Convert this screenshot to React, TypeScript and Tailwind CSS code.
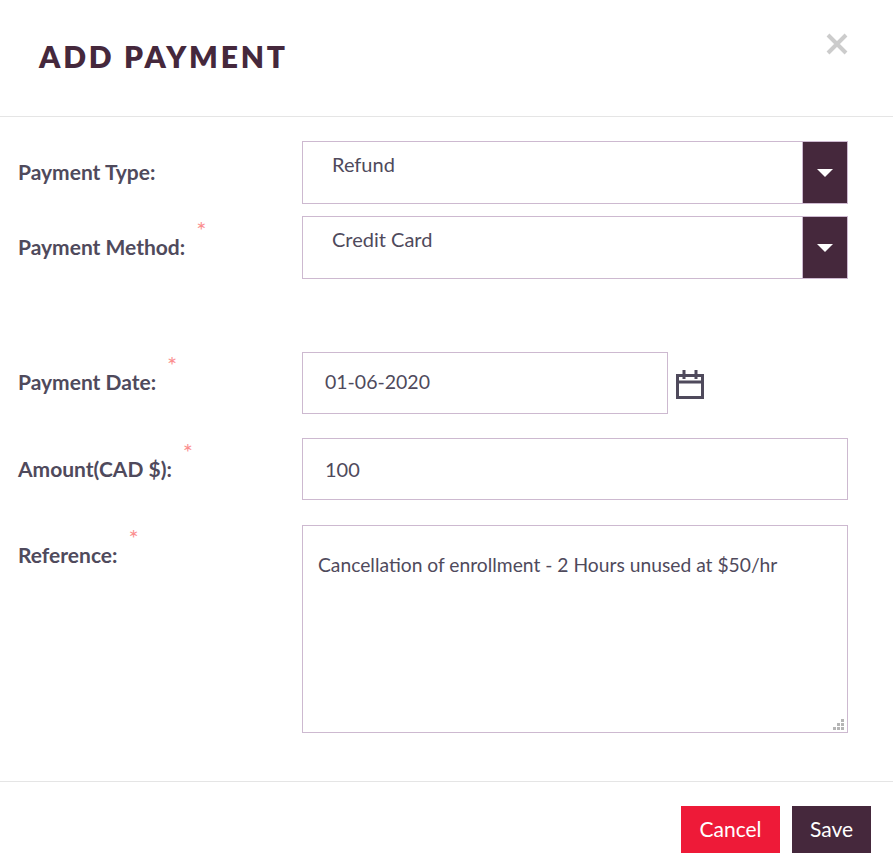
const labelClass = 'w-[302px] shrink-0 pl-[18px] text-[21px] font-bold leading-[22px] text-[#4f4a5c]'
const boxClass = 'border border-[#cdb9d0] bg-white text-[20px] leading-[24px] text-[#4f4a5c]'

const Required = () => (
  <span className="absolute top-[-16px] ml-[11px] text-[24px] font-normal leading-[24px] text-[#fb8f8f]">*</span>
)

const Label: React.FC<{ text: string; required?: boolean; raised?: boolean }> = ({ text, required, raised }) => (
  <div className={`${labelClass} ${raised ? 'pb-[2px]' : ''}`}>
    <span className="relative">
      {text}
      {required ? <Required /> : ''}
    </span>
  </div>
)

const SelectBox: React.FC<{ value: string }> = ({ value }) => (
  <div className={`flex h-[63px] w-[546px] ${boxClass}`}>
    <div className="flex-1 pl-[29px] pt-[10px]">{value}</div>
    <div className="flex w-[45px] items-center justify-center border-l border-[#cdb9d0] bg-[#45283c]">
      <svg width="16" height="8" viewBox="0 0 16 8">
        <path d="M0 0h16L8 8z" fill="#ffffff" />
      </svg>
    </div>
  </div>
)

const CalendarIcon = () => (
  <svg width="30" height="30" viewBox="0 0 30 30" fill="none" stroke="#4f4a5c" strokeWidth="3">
    <rect x="2.5" y="6.5" width="25" height="22" />
    <path d="M2.5 13h25M9 1v9M21 1v9" />
  </svg>
)

const ResizeGrip = () => (
  <svg width="12" height="12" viewBox="0 0 12 12" fill="#b5b5b5" className="absolute bottom-[1px] right-[2px]">
    <rect x="8" y="0" width="3" height="3" />
    <rect x="4" y="4" width="3" height="3" />
    <rect x="8" y="4" width="3" height="3" />
    <rect x="0" y="8" width="3" height="3" />
    <rect x="4" y="8" width="3" height="3" />
    <rect x="8" y="8" width="3" height="3" />
  </svg>
)

const App: React.FC = () => {
  return (
    <div className="h-[858px] w-[893px] bg-white font-['Lato',sans-serif]">
      {/* Header */}
      <div className="flex h-[117px] items-start justify-between border-b border-[#e5e5e5] pl-[39px] pr-[44px]">
        <h1 className="mt-[37px] text-[30px] font-extrabold leading-[38px] tracking-[2.8px] text-[#45283c]">ADD PAYMENT</h1>
        <svg width="24" height="24" viewBox="0 0 24 24" className="mt-[32px]" stroke="#cccccc" strokeWidth="4" fill="none">
          <path d="M3 3l18 18M21 3L3 21" />
        </svg>
      </div>

      {/* Form */}
      <div className="flex h-[665px] flex-col border-b border-[#e5e5e5] pt-[24px]">
        <div className="flex items-center">
          <Label text="Payment Type:" raised />
          <SelectBox value="Refund" />
        </div>
        <div className="mt-[12px] flex items-center">
          <Label text="Payment Method:" required raised />
          <SelectBox value="Credit Card" />
        </div>
        <div className="mt-[73px] flex items-center">
          <Label text="Payment Date:" required raised />
          <div className={`flex h-[62px] w-[366px] items-center pb-[2px] pl-[22px] !text-[19.5px] ${boxClass}`}>01-06-2020</div>
          <div className="ml-[7px] mt-[1px]">
            <CalendarIcon />
          </div>
        </div>
        <div className="mt-[24px] flex items-center">
          <Label text="Amount(CAD $):" required />
          <div className={`flex h-[62px] w-[546px] items-center pl-[22px] ${boxClass}`}>100</div>
        </div>
        <div className="mt-[25px] flex">
          <div className="pt-[19px]">
            <Label text="Reference:" required />
          </div>
          <div className={`relative h-[208px] w-[546px] pl-[15px] pt-[27px] !text-[19.25px] ${boxClass}`}>
            Cancellation of enrollment - 2 Hours unused at $50/hr
            <ResizeGrip />
          </div>
        </div>
      </div>

      {/* Footer */}
      <div className="flex justify-end gap-[12px] pr-[22px] pt-[24px]">
        <button className="h-[47px] w-[99px] bg-[#ee1a38] pb-[2px] text-[21px] text-white">Cancel</button>
        <button className="h-[47px] w-[79px] bg-[#45283c] pb-[2px] text-[21px] text-white">Save</button>
      </div>
    </div>
  )
}

export default App
